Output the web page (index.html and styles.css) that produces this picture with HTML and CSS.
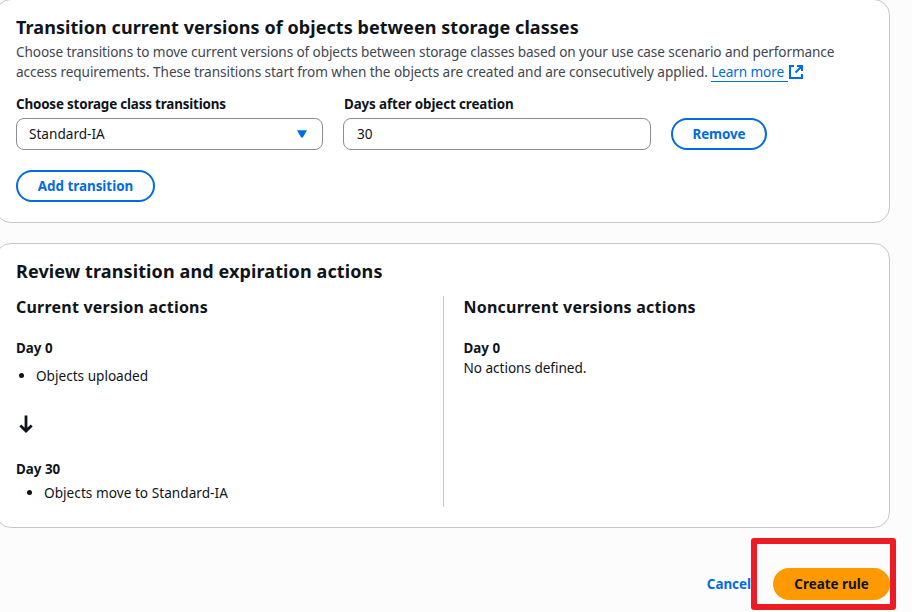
FILE: index.html
```html
<!DOCTYPE html>
<html lang="en">
<head>
<meta charset="utf-8">
<title>Create lifecycle rule</title>
<link rel="stylesheet" href="styles.css">
</head>
<body>
<main class="page">
  <section class="card transitions">
    <h2 class="title">Transition current versions of objects between storage classes</h2>
    <p class="description"><span class="intro">Choose transitions to move current versions of objects between storage classes based on your use case scenario and performance</span><br>access requirements. These transitions start from when the objects are created and are consecutively applied. <a class="learn" href="#"><span class="learn-text">Learn more</span><svg class="external" viewBox="0 0 14 14" width="14" height="14"><path d="M5 1H1v12h12V9M8 1h5v5M13 1 6.500 7.500"/></svg></a></p>
    <div class="fields">
      <div class="field">
        <div class="label">Choose storage class transitions</div>
        <div class="control select">Standard-IA<svg class="caret" viewBox="0 0 10 8" width="10" height="8"><path d="M0 .3h10L5.800 7.600H4.200z"/></svg></div>
      </div>
      <div class="field days">
        <div class="label">Days after object creation</div>
        <div class="control">30</div>
      </div>
      <button class="button remove">Remove</button>
    </div>
    <button class="button add">Add transition</button>
  </section>

  <section class="card review">
    <h2 class="title wide">Review transition and expiration actions</h2>
    <div class="columns">
      <div class="column">
        <h3 class="subtitle">Current version actions</h3>
        <div class="day">Day 0</div>
        <ul class="list uploaded"><li>Objects uploaded</li></ul>
        <svg class="arrow" viewBox="0 0 20 20" width="20" height="20"><path d="M10 1.500V17M4.300 11.500 10 17l5.700-5.500"/></svg>
        <div class="day">Day 30</div>
        <ul class="list moved"><li>Objects move to Standard-IA</li></ul>
      </div>
      <div class="column">
        <h3 class="subtitle">Noncurrent versions actions</h3>
        <div class="day">Day 0</div>
        <div class="none">No actions defined.</div>
      </div>
    </div>
  </section>

  <footer class="actions">
    <button class="cancel">Cancel</button>
    <div class="create-wrap"><button class="create">Create rule</button><div class="highlight"></div></div>
  </footer>
</main>
</body>
</html>
```
FILE: styles.css
```css
* { box-sizing: border-box; }
html, body { margin: 0; height: 612px; overflow: hidden; }
body {
  background: #fcfcfd;
  color: #0f141a;
  font: 13.6px/20px "Noto Sans", "Open Sans", sans-serif;
}
h2, h3, p, ul { margin: 0; padding: 0; }
button { font: inherit; font-size: 13.4px; font-weight: 700; white-space: nowrap; padding: 0; }
.page { width: 895px; margin: -1px 0 0 -5px; }
.card {
  background: #fff;
  border: 1px solid #c6c6cd;
  border-radius: 16px;
  padding: 0 20px;
}
.transitions { height: 224px; padding-top: 15px; }
.review { height: 285px; margin-top: 20px; padding-top: 15px; }
.title { font-size: 18px; line-height: 24px; font-weight: 700; white-space: nowrap; letter-spacing: .06px; }
.title.wide { letter-spacing: .11px; }
.description { margin-top: 3px; color: #424650; white-space: nowrap; letter-spacing: -.07px; }
.intro { letter-spacing: -.108px; }
.learn { color: #006ce0; text-decoration: none; display: inline-flex; align-items: center; }
.learn-text { border-bottom: 1px solid #006ce0; padding-right: 4px; height: 20px; letter-spacing: -.12px; }
.external { margin-left: 1px; fill: none; stroke: #006ce0; stroke-width: 2; }
.fields { display: flex; gap: 20px; align-items: flex-end; margin-top: 12px; }
.field { width: 307px; }
.field.days { width: 308px; }
.label { font-size: 13.4px; font-weight: 700; margin-bottom: 4px; white-space: nowrap; letter-spacing: -.17px; }
.days .label { letter-spacing: -.12px; padding-left: 1px; }
.control {
  height: 32px;
  border: 1px solid #8c8c94;
  border-radius: 8px;
  padding: 0 15px 0 13px;
  display: flex;
  align-items: center;
  justify-content: space-between;
}
.select { padding-left: 12px; }
.caret { fill: #006ce0; }
.button {
  height: 32px;
  border: 2px solid #006ce0;
  border-radius: 16px;
  background: #fff;
  color: #006ce0;
}
.remove { width: 96px; letter-spacing: -.1px; }
.add { width: 139px; margin-top: 20px; display: block; }
.columns { display: grid; grid-template-columns: 428px 1fr; height: 211px; margin-top: 13px; }
.column + .column { padding-left: 19.5px; }
.column:first-child { border-right: 1px solid #c6c6cd; }
.subtitle { font-size: 16px; line-height: 20px; font-weight: 700; padding-top: 1px; margin-bottom: 21px; white-space: nowrap; letter-spacing: .22px; }
.day { font-size: 13.4px; font-weight: 700; }
.list { padding-left: 20px; }
.uploaded { margin-top: 8px; }
.moved { padding-left: 28px; margin-top: 4px; letter-spacing: .04px; }
.none { letter-spacing: -.04px; }
.arrow { display: block; margin: 28px 0 25px; fill: none; stroke: #0f141a; stroke-width: 2.8; }
.actions { display: flex; justify-content: flex-end; align-items: center; gap: 22px; margin-top: 40px; }
.cancel { border: 0; background: none; color: #006ce0; }
.create-wrap { position: relative; }
.create { width: 117px; height: 32px; border: 0; border-radius: 16px; background: #ff9900; color: #0f141a; display: block; }
.highlight {
  position: absolute;
  left: -22px;
  top: -30px;
  width: 145px;
  height: 72px;
  border: 6px solid #ed1c24;
  border-radius: 3px;
}
```
